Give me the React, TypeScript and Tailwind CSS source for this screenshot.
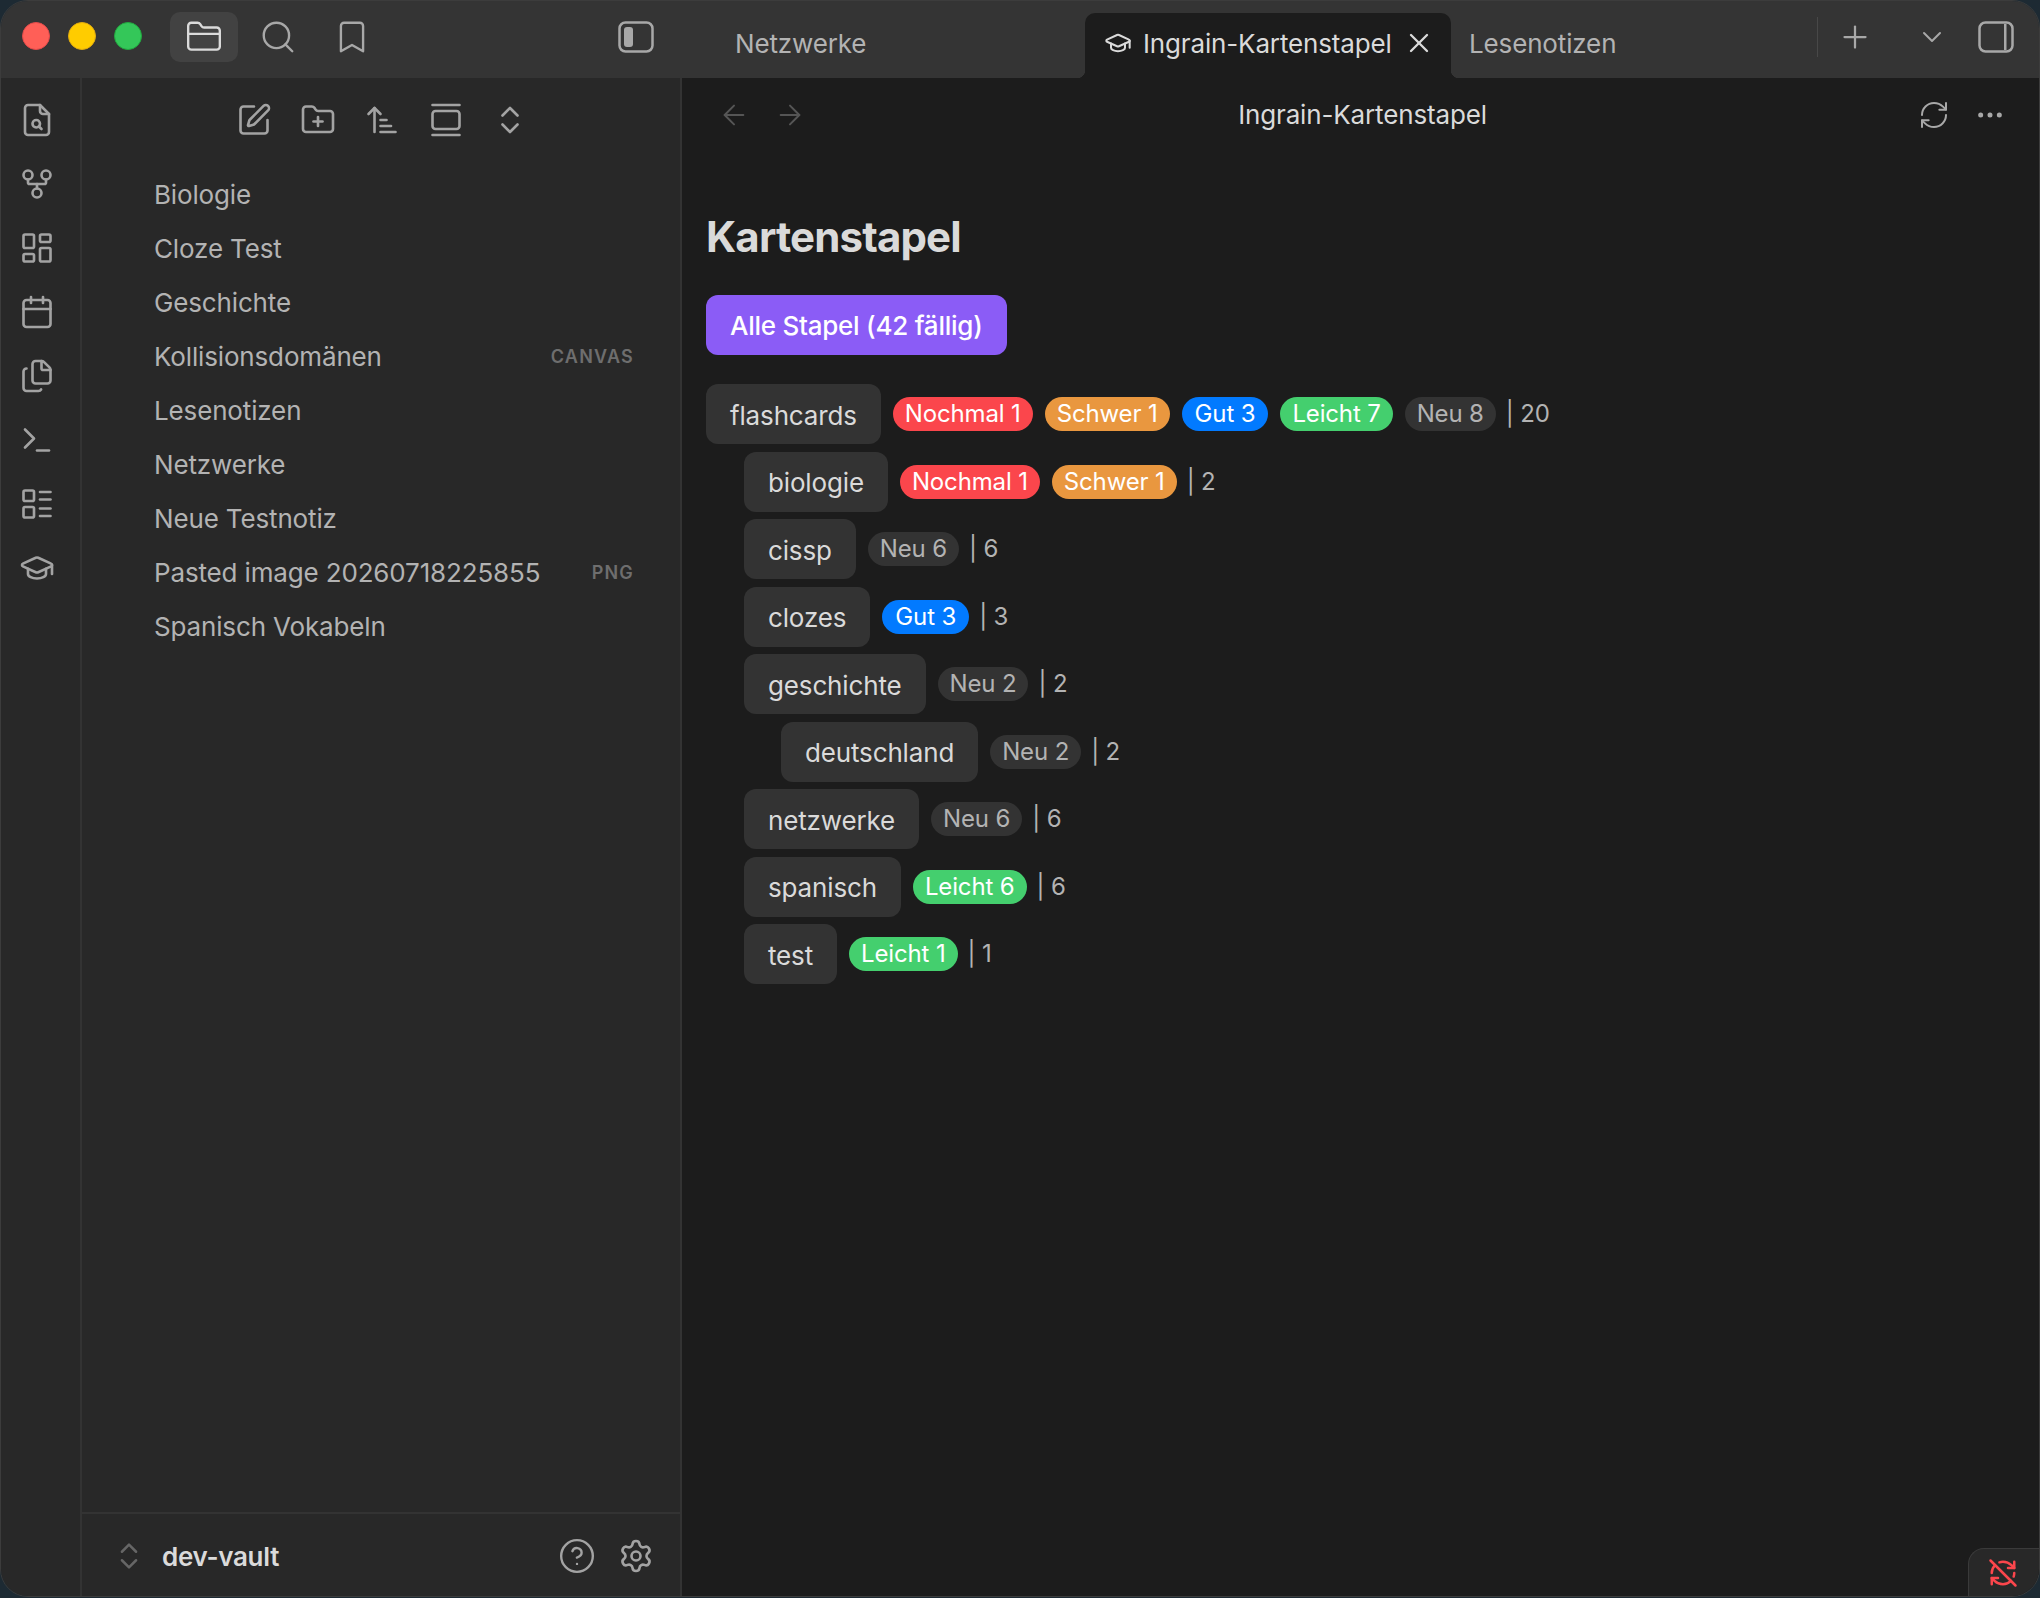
import {
  ArrowLeft,
  ArrowRight,
  ArrowUpNarrowWide,
  Bookmark,
  Calendar,
  ChevronDown,
  ChevronsUpDown,
  CircleHelp,
  Ellipsis,
  Files,
  FolderClosed,
  FolderPlus,
  GalleryVertical,
  GitFork,
  GraduationCap,
  LayoutDashboard,
  LayoutList,
  Plus,
  RefreshCw,
  RefreshCwOff,
  Search,
  Settings,
  SquarePen,
  Terminal,
  X,
} from "lucide-react";

const font = "font-['Inter','Liberation_Sans',sans-serif]";

const files = [
  { name: "Biologie" },
  { name: "Cloze Test" },
  { name: "Geschichte" },
  { name: "Kollisionsdomänen", tag: "CANVAS" },
  { name: "Lesenotizen" },
  { name: "Netzwerke" },
  { name: "Neue Testnotiz" },
  { name: "Pasted image 20260718225855", tag: "PNG" },
  { name: "Spanisch Vokabeln" },
];

type Kind = "Nochmal" | "Schwer" | "Gut" | "Leicht" | "Neu";

const pillClass: Record<Kind, string> = {
  Nochmal: "bg-[#fb464c] px-3 text-white",
  Schwer: "bg-[#e9973f] px-3 text-white",
  Gut: "bg-[#027aff] px-[13px] text-white",
  Leicht: "bg-[#44cf6e] px-3 text-white",
  Neu: "bg-[#333333] px-3 text-[#b3b3b3]",
};

const indentClass = ["", "ml-[38px]", "ml-[75px]"];

const decks: { name: string; depth: number; pills: [Kind, number][]; total: number }[] = [
  {
    name: "flashcards",
    depth: 0,
    pills: [
      ["Nochmal", 1],
      ["Schwer", 1],
      ["Gut", 3],
      ["Leicht", 7],
      ["Neu", 8],
    ],
    total: 20,
  },
  {
    name: "biologie",
    depth: 1,
    pills: [
      ["Nochmal", 1],
      ["Schwer", 1],
    ],
    total: 2,
  },
  { name: "cissp", depth: 1, pills: [["Neu", 6]], total: 6 },
  { name: "clozes", depth: 1, pills: [["Gut", 3]], total: 3 },
  { name: "geschichte", depth: 1, pills: [["Neu", 2]], total: 2 },
  { name: "deutschland", depth: 2, pills: [["Neu", 2]], total: 2 },
  { name: "netzwerke", depth: 1, pills: [["Neu", 6]], total: 6 },
  { name: "spanisch", depth: 1, pills: [["Leicht", 6]], total: 6 },
  { name: "test", depth: 1, pills: [["Leicht", 1]], total: 1 },
];

function FileSearchIcon() {
  return (
    <svg width="36" height="36" viewBox="0 0 24 24" fill="none" stroke="currentColor" strokeWidth="1.75" strokeLinecap="round" strokeLinejoin="round">
      <path d="M14 2H6a2 2 0 0 0-2 2v16a2 2 0 0 0 2 2h12a2 2 0 0 0 2-2V8z" />
      <path d="M14 2v4a2 2 0 0 0 2 2h4" />
      <circle cx="11.5" cy="14.5" r="2.5" />
      <path d="M13.3 16.3 15 18" />
    </svg>
  );
}

function SidebarIcon({ right }: { right?: boolean }) {
  return (
    <svg width="36" height="32" viewBox="0 0 36 32" fill="none" stroke="currentColor">
      <rect x="1.5" y="1.5" width="33" height="29" rx="6" strokeWidth="2.5" />
      {right ? (
        <rect x="26" y="3" width="2.5" height="26" fill="currentColor" stroke="none" />
      ) : (
        <rect x="6" y="6" width="9" height="20" rx="3" fill="currentColor" stroke="none" />
      )}
    </svg>
  );
}

function Titlebar() {
  return (
    <div className="flex h-[77px] shrink-0 items-stretch bg-[#343434]">
      <div className="flex w-[718px] shrink-0 items-center pb-[5px] pl-[21px]">
        <div className="mb-[2px] flex gap-[18px]">
          <span className="h-7 w-7 rounded-full border border-[#e24b4b] bg-[#ff5f57]" />
          <span className="h-7 w-7 rounded-full border border-[#e0aa10] bg-[#ffcc00]" />
          <span className="h-7 w-7 rounded-full border border-[#22a83f] bg-[#34c759]" />
        </div>
        <div className="ml-[28px] flex h-[50px] w-[68px] items-center justify-center rounded-[10px] bg-[#424242] text-[#dadada]">
          <FolderClosed size={38} strokeWidth={1.5} />
        </div>
        <div className="ml-[6px] flex w-[68px] justify-center text-[#a8a8a8]">
          <Search size={38} strokeWidth={1.5} />
        </div>
        <div className="ml-[6px] flex w-[68px] justify-center text-[#a8a8a8]">
          <Bookmark size={38} strokeWidth={1.5} />
        </div>
        <div className="ml-[232px] flex text-[#a8a8a8]">
          <SidebarIcon />
        </div>
      </div>

      <div className="flex w-[366px] items-center pl-[16px] pt-[7px] text-[26px] text-[#b3b3b3]">Netzwerke</div>

      <div className="relative mt-3 flex w-[366px] items-center rounded-t-[10px] bg-[#1c1c1c] pb-[5px] pl-[19px] pr-4 text-[26px] text-[#dadada]">
        <span className="absolute -left-2 bottom-0 h-2 w-2 bg-[radial-gradient(circle_at_0_0,transparent_8px,#1c1c1c_8.5px)]" />
        <span className="absolute -right-2 bottom-0 h-2 w-2 bg-[radial-gradient(circle_at_100%_0,transparent_8px,#1c1c1c_8.5px)]" />
        <GraduationCap size={28} strokeWidth={1.75} />
        <span className="ml-[11px] flex-1">Ingrain-Kartenstapel</span>
        <X size={32} strokeWidth={1.75} />
      </div>

      <div className="flex w-[366px] items-center pl-[18px] pt-[7px] text-[26px] text-[#b3b3b3]">Lesenotizen</div>

      <div className="flex flex-1 items-center pb-[5px] text-[#a8a8a8]">
        <div className="h-[40px] w-[1px] bg-[#484848]" />
        <Plus size={36} strokeWidth={1.5} className="ml-[19px]" />
        <ChevronDown size={32} strokeWidth={1.5} className="ml-[43px]" />
        <div className="ml-[30px] flex">
          <SidebarIcon right />
        </div>
      </div>
    </div>
  );
}

function Ribbon() {
  const icons = [
    <FileSearchIcon key="file" />,
    <GitFork key="graph" size={36} strokeWidth={1.75} />,
    <LayoutDashboard key="canvas" size={36} strokeWidth={1.75} />,
    <Calendar key="calendar" size={36} strokeWidth={1.75} />,
    <Files key="files" size={36} strokeWidth={1.75} />,
    <Terminal key="terminal" size={36} strokeWidth={1.75} />,
    <LayoutList key="list" size={36} strokeWidth={1.75} />,
    <GraduationCap key="cap" size={36} strokeWidth={1.75} />,
  ];
  return (
    <div className="flex w-[81px] shrink-0 flex-col items-center gap-[28px] border-r-2 border-[#333333] bg-[#282828] pr-[7px] pt-[24px] text-[#a3a3a3]">
      {icons}
    </div>
  );
}

function Sidebar() {
  return (
    <div className="flex w-[600px] shrink-0 flex-col border-r-2 border-[#333333] bg-[#282828]">
      <div className="flex justify-center gap-[28px] pl-[2px] pt-[24px] text-[#a3a3a3]">
        <SquarePen size={36} strokeWidth={1.75} />
        <FolderPlus size={36} strokeWidth={1.75} />
        <ArrowUpNarrowWide size={36} strokeWidth={1.75} />
        <GalleryVertical size={36} strokeWidth={1.75} />
        <ChevronsUpDown size={36} strokeWidth={1.75} />
      </div>

      <div className="mt-[29px] flex flex-1 flex-col">
        {files.map((f) => (
          <div key={f.name} className="flex h-[54px] items-center pl-[72px] pr-[46px]">
            <span className="flex-1 text-[26px] text-[#b3b3b3]">{f.name}</span>
            {f.tag && (
              <span className="text-[18px] font-semibold tracking-[1.2px] text-[#6e6e6e]">{f.tag}</span>
            )}
          </div>
        ))}
      </div>

      <div className="flex h-[84px] items-center border-t-2 border-[#333333] pl-[30px] pr-[26px] pt-[2px]">
        <ChevronsUpDown size={34} strokeWidth={1.75} className="text-[#666666]" />
        <span className="ml-[16px] flex-1 text-[26px] font-semibold tracking-[-0.3px] text-[#dadada]">dev-vault</span>
        <CircleHelp size={38} strokeWidth={1.5} className="text-[#a3a3a3]" />
        <Settings size={36} strokeWidth={1.75} className="ml-[22px] text-[#a3a3a3]" />
      </div>
    </div>
  );
}

function DeckRow({ deck }: { deck: (typeof decks)[number] }) {
  return (
    <div className={`flex items-center gap-3 ${indentClass[deck.depth]}`}>
      <div className="flex h-[60px] items-center rounded-[12px] bg-[#333333] px-6 pt-[2px] text-[26px] text-[#dadada]">
        {deck.name}
      </div>
      {deck.pills.map(([kind, n]) => (
        <span key={kind} className={`flex h-[34px] items-center rounded-full text-[24px] ${pillClass[kind]}`}>
          {kind} {n}
        </span>
      ))}
      <span className="-ml-[2px] text-[24px] text-[#b3b3b3]">| {deck.total}</span>
    </div>
  );
}

function Main() {
  return (
    <div className="flex min-w-0 flex-1 flex-col bg-[#1c1c1c]">
      <div className="flex h-[73px] shrink-0 items-center pl-[36px] pr-[33px]">
        <ArrowLeft size={32} strokeWidth={1.5} className="text-[#555555]" />
        <ArrowRight size={32} strokeWidth={1.5} className="ml-[24px] text-[#555555]" />
        <span className="flex-1 pl-[1px] text-center text-[26px] text-[#dadada]">Ingrain-Kartenstapel</span>
        <RefreshCw size={32} strokeWidth={1.5} className="text-[#a8a8a8]" />
        <Ellipsis size={32} strokeWidth={1.75} className="ml-[24px] text-[#a8a8a8]" />
      </div>
      <div className="pl-[24px] pt-[51px]">
        <h1 className="text-[42px] leading-[70px] font-bold tracking-[-0.85px] text-[#dadada]">Kartenstapel</h1>
        <button className="mt-[23px] flex h-[60px] items-center rounded-[12px] bg-[#8b5cf6] px-6 text-[26px] font-medium tracking-[-0.25px] text-white">
          Alle Stapel (42 fällig)
        </button>
        <div className="mt-[29px] flex flex-col gap-[7.5px]">
          {decks.map((d) => (
            <DeckRow key={d.name} deck={d} />
          ))}
        </div>
      </div>
    </div>
  );
}

export default function App() {
  return (
    <div className={`h-screen w-screen bg-[#1d2a33] tracking-[-0.15px] ${font}`}>
      <div className="relative flex h-[1597px] flex-col overflow-hidden rounded-[28px] border border-[#3c3c3c]">
        <Titlebar />
        <div className="flex min-h-0 flex-1">
          <Ribbon />
          <Sidebar />
          <Main />
        </div>
        <div className="absolute bottom-0 right-0 flex h-[48px] w-[71px] items-center justify-center rounded-tl-[16px] border-l border-t border-[#3a3a3a] bg-[#282828] pr-[2px] text-[#fb464c]">
          <RefreshCwOff size={30} strokeWidth={2} />
        </div>
      </div>
    </div>
  );
}
